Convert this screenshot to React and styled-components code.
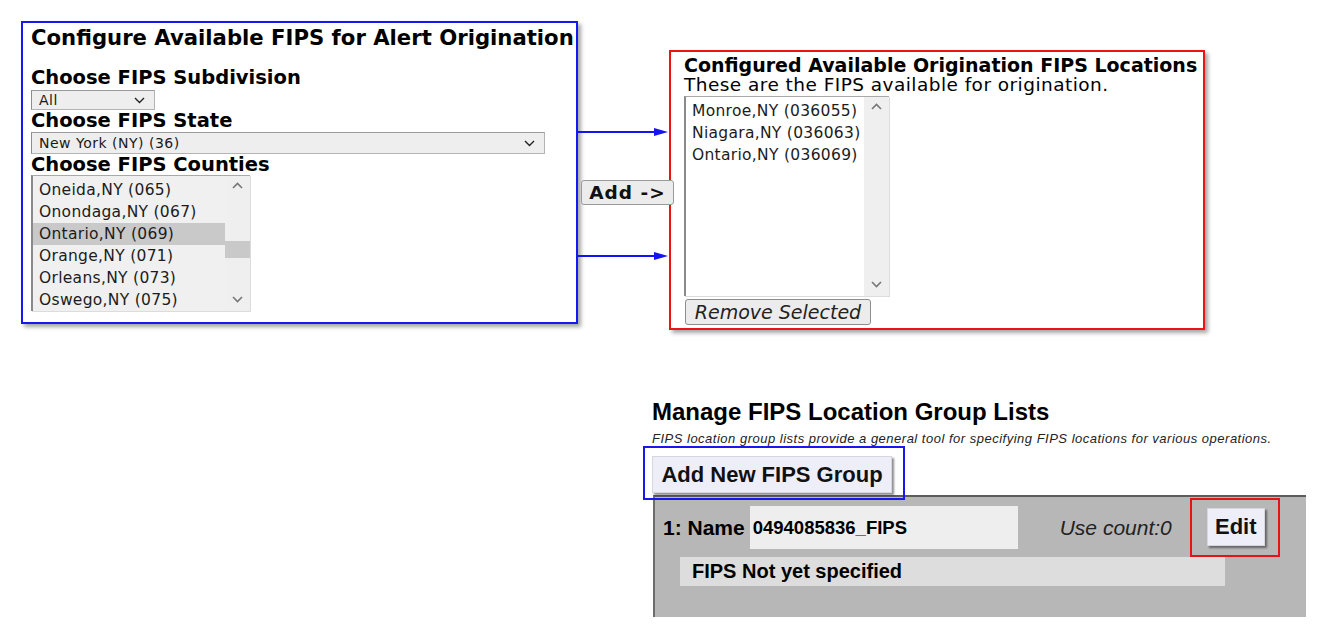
import React from 'react';
import styled, { createGlobalStyle } from 'styled-components';

const GlobalStyle = createGlobalStyle`
  html, body {
    margin: 0;
    background: #ffffff;
  }
  * {
    box-sizing: border-box;
  }
`;

const VERDANA = `"DejaVu Sans", Verdana, sans-serif`;
const ARIAL = `"Liberation Sans", Arial, sans-serif`;

/* page */
const Page = styled.div`
  padding: 21px 0 0 21px;
  font-family: ${VERDANA};
  color: #000;
`;
const TopRow = styled.div`
  display: flex;
  align-items: flex-start;
`;

/* left panel: choose FIPS */
const ChoosePanel = styled.div`
  width: 557px;
  height: 303px;
  border: 2px solid #1717f2;
  box-shadow: 3px 3px 4px rgba(0, 0, 0, 0.35);
  padding: 4px 0 0 8px;
`;
const PanelTitle = styled.div`
  font-size: ${(p) => p.$size || 21.2}px;
  font-weight: bold;
  line-height: ${(p) => p.$lh || 22}px;
  margin-top: ${(p) => p.$mt || 0}px;
  white-space: nowrap;
`;
const Label = styled.div`
  font-size: 19.5px;
  font-weight: bold;
  line-height: 21px;
  margin-top: ${(p) => p.$mt || 0}px;
  white-space: nowrap;
`;
const SubText = styled.div`
  font-size: 18.5px;
  line-height: 19px;
  letter-spacing: 0.45px;
  white-space: nowrap;
`;
const Select = styled.div`
  display: flex;
  align-items: center;
  justify-content: space-between;
  width: ${(p) => p.$w}px;
  height: ${(p) => p.$h}px;
  margin-top: ${(p) => p.$mt || 0}px;
  padding: 0 9px 0 7px;
  background: #eeeeee;
  border: 1px solid #b4b4b4;
  border-left-color: #8d8d8d;
  border-top-color: #9a9a9a;
  font-size: 14px;
  letter-spacing: 0.5px;
  color: #1a1a1a;
`;

/* list boxes */
const ListBox = styled.div`
  display: flex;
  width: ${(p) => p.$w}px;
  height: ${(p) => p.$h}px;
  background: ${(p) => p.$bg};
  border-top: 1px solid #a9a9a9;
  border-left: 2px solid #8a8a8a;
  box-shadow: 1px 1px 0 #dcdcdc;
  overflow: hidden;
`;
const Items = styled.div`
  flex: 1;
  overflow: hidden;
  padding-top: ${(p) => p.$pt || 0}px;
`;
const ItemList = styled.div`
  margin-top: ${(p) => p.$shift || 0}px;
`;
const Item = styled.div`
  height: 22px;
  line-height: 22px;
  padding-left: 6px;
  font-size: 15.5px;
  letter-spacing: 0.3px;
  color: #1c1c1c;
  white-space: nowrap;
  background: ${(p) => (p.$selected ? '#c9c9c9' : 'transparent')};
`;
const ScrollBar = styled.div`
  width: 25px;
  display: flex;
  flex-direction: column;
  align-items: center;
  background: #efefef;
  padding: 6px 0 8px;
`;
const Thumb = styled.div`
  align-self: stretch;
  height: 17px;
  margin-top: ${(p) => p.$top}px;
  background: #c9c9c9;
`;
const ChevronDown = styled.div`
  margin-top: auto;
  line-height: 0;
`;

const Chevron = ({ up, color = '#777', w = 11, h = 7, sw = 1.6 }) => (
  <svg width={w} height={h} viewBox="0 0 11 7">
    <polyline
      points={up ? '1,6 5.5,1.5 10,6' : '1,1 5.5,5.5 10,1'}
      fill="none"
      stroke={color}
      strokeWidth={sw}
    />
  </svg>
);

/* connector between the two panels */
const Connector = styled.div`
  width: 91px;
  display: flex;
  flex-direction: column;
  align-items: flex-start;
  padding-top: 105px;
`;
const ArrowLine = styled.svg`
  display: block;
  margin-top: ${(p) => p.$mt || 0}px;
`;
const AddButton = styled.button`
  position: relative;
  z-index: 1;
  margin: 42px 0 0 3px;
  width: 93px;
  height: 25px;
  padding: 0;
  font-family: ${VERDANA};
  font-size: 18.5px;
  font-weight: bold;
  letter-spacing: 1px;
  color: #111;
  background: #ececec;
  border: 1px solid #9a9a9a;
  border-radius: 3px;
`;

const Arrow = ({ mt }) => (
  <ArrowLine $mt={mt} width="91" height="12" viewBox="0 0 91 12">
    <line x1="0" y1="6" x2="78" y2="6" stroke="#1414f0" strokeWidth="2" />
    <polygon points="76,2 90,6 76,10" fill="#1414f0" />
  </ArrowLine>
);

/* right panel: configured locations */
const ConfiguredPanel = styled.div`
  margin-top: 29px;
  width: 536px;
  height: 280px;
  border: 2px solid #ec1313;
  box-shadow: 3px 3px 4px rgba(0, 0, 0, 0.35);
  padding: 3px 0 0 13px;
`;
const ListWrap = styled.div`
  margin-top: 2px;
`;
const RemoveButton = styled.button`
  display: block;
  margin: 3px 0 0 1px;
  width: 186px;
  height: 26px;
  padding: 0;
  font-family: ${VERDANA};
  font-size: 19px;
  font-style: italic;
  color: #222;
  background: #ececec;
  border: 1px solid #8e8e8e;
  border-radius: 3px;
`;

/* bottom: manage group lists */
const ManageSection = styled.div`
  margin: 67px 0 0 622px;
  width: 663px;
  font-family: ${ARIAL};
`;
const Heading = styled.div`
  margin-left: 9px;
  font-size: 24px;
  font-weight: bold;
  line-height: 30px;
  white-space: nowrap;
`;
const Hint = styled.div`
  margin: 5px 0 0 9px;
  font-size: 13px;
  font-style: italic;
  letter-spacing: 0.5px;
  line-height: 14px;
  color: #222;
  white-space: nowrap;
`;
const Highlight = styled.div`
  position: relative;
  z-index: 2;
  width: 262px;
  height: 54px;
  border: 2px solid ${(p) => p.$color};
  padding: 8px 0 0 7px;
`;
const BigButton = styled.button`
  display: flex;
  align-items: center;
  justify-content: center;
  width: ${(p) => p.$w}px;
  height: ${(p) => p.$h}px;
  padding: 0;
  font-family: ${ARIAL};
  font-size: ${(p) => p.$size}px;
  font-weight: bold;
  color: #111;
  white-space: nowrap;
  background: #eeeef8;
  border: 1px solid #d6d6de;
  box-shadow: 2px 2px 2px rgba(0, 0, 0, 0.45);
`;
const GroupPanel = styled.div`
  margin: -5px 0 0 10px;
  width: 653px;
  height: 122px;
  background: #b7b7b7;
  border-top: 2px solid #5c5c5c;
  border-left: 2px solid #6c6c6c;
  padding: 1px 0 0 8px;
`;
const GroupRow = styled.div`
  display: flex;
  align-items: center;
  height: 59px;
`;
const NameLabel = styled.span`
  font-size: 21px;
  font-weight: bold;
  white-space: nowrap;
`;
const NameField = styled.div`
  display: flex;
  align-items: center;
  margin-left: 5px;
  width: 268px;
  height: 43px;
  padding-left: 3px;
  background: #eeeeee;
  font-size: 18.5px;
  font-weight: bold;
`;
const UseCount = styled.span`
  margin-left: 42px;
  font-size: 21px;
  font-style: italic;
  color: #222;
  white-space: nowrap;
`;
const EditBox = styled(Highlight)`
  width: 90px;
  height: 59px;
  margin-left: 18px;
  padding: 8px 0 0 15px;
`;
const FipsStatus = styled.div`
  margin-left: 17px;
  width: 545px;
  height: 29px;
  line-height: 29px;
  padding-left: 12px;
  background: #dddddd;
  font-size: 20px;
  font-weight: bold;
  white-space: nowrap;
`;

const counties = [
  'Niagara,NY (063)',
  'Oneida,NY (065)',
  'Onondaga,NY (067)',
  'Ontario,NY (069)',
  'Orange,NY (071)',
  'Orleans,NY (073)',
  'Oswego,NY (075)',
];
const configured = ['Monroe,NY (036055)', 'Niagara,NY (036063)', 'Ontario,NY (036069)'];

export default function App() {
  return (
    <Page>
      <GlobalStyle />
      <TopRow>
        <ChoosePanel>
          <PanelTitle>Configure Available FIPS for Alert Origination</PanelTitle>
          <Label $mt={18}>Choose FIPS Subdivision</Label>
          <Select $w={124} $h={20} $mt={2}>
            <span>All</span>
            <Chevron color="#222" sw={1.4} />
          </Select>
          <Label>Choose FIPS State</Label>
          <Select $w={514} $h={22} $mt={1}>
            <span>New York (NY) (36)</span>
            <Chevron color="#222" sw={1.4} />
          </Select>
          <Label>Choose FIPS Counties</Label>
          <ListBox $w={219} $h={136} $bg="#f0f0f0">
            <Items>
              <ItemList $shift={-19}>
                {counties.map((c) => (
                  <Item key={c} $selected={c.startsWith('Ontario')}>
                    {c}
                  </Item>
                ))}
              </ItemList>
            </Items>
            <ScrollBar>
              <Chevron up />
              <Thumb $top={52} />
              <ChevronDown>
                <Chevron />
              </ChevronDown>
            </ScrollBar>
          </ListBox>
        </ChoosePanel>

        <Connector>
          <Arrow />
          <AddButton>Add -&gt;</AddButton>
          <Arrow mt={45} />
        </Connector>

        <ConfiguredPanel>
          <PanelTitle $size={19} $lh={20}>
            Configured Available Origination FIPS Locations
          </PanelTitle>
          <SubText>These are the FIPS available for origination.</SubText>
          <ListWrap>
            <ListBox $w={205} $h={200} $bg="#ffffff">
              <Items $pt={3}>
                {configured.map((c) => (
                  <Item key={c}>{c}</Item>
                ))}
              </Items>
              <ScrollBar>
                <Chevron up />
                <ChevronDown>
                  <Chevron />
                </ChevronDown>
              </ScrollBar>
            </ListBox>
          </ListWrap>
          <RemoveButton>Remove Selected</RemoveButton>
        </ConfiguredPanel>
      </TopRow>

      <ManageSection>
        <Heading>Manage FIPS Location Group Lists</Heading>
        <Hint>
          FIPS location group lists provide a general tool for specifying FIPS locations for
          various operations.
        </Hint>
        <Highlight $color="#1818ee">
          <BigButton $w={240} $h={37} $size={22}>
            Add New FIPS Group
          </BigButton>
        </Highlight>
        <GroupPanel>
          <GroupRow>
            <NameLabel>1: Name</NameLabel>
            <NameField>0494085836_FIPS</NameField>
            <UseCount>Use count:0</UseCount>
            <EditBox $color="#e41414">
              <BigButton $w={58} $h={38} $size={22}>
                Edit
              </BigButton>
            </EditBox>
          </GroupRow>
          <FipsStatus>FIPS Not yet specified</FipsStatus>
        </GroupPanel>
      </ManageSection>
    </Page>
  );
}
